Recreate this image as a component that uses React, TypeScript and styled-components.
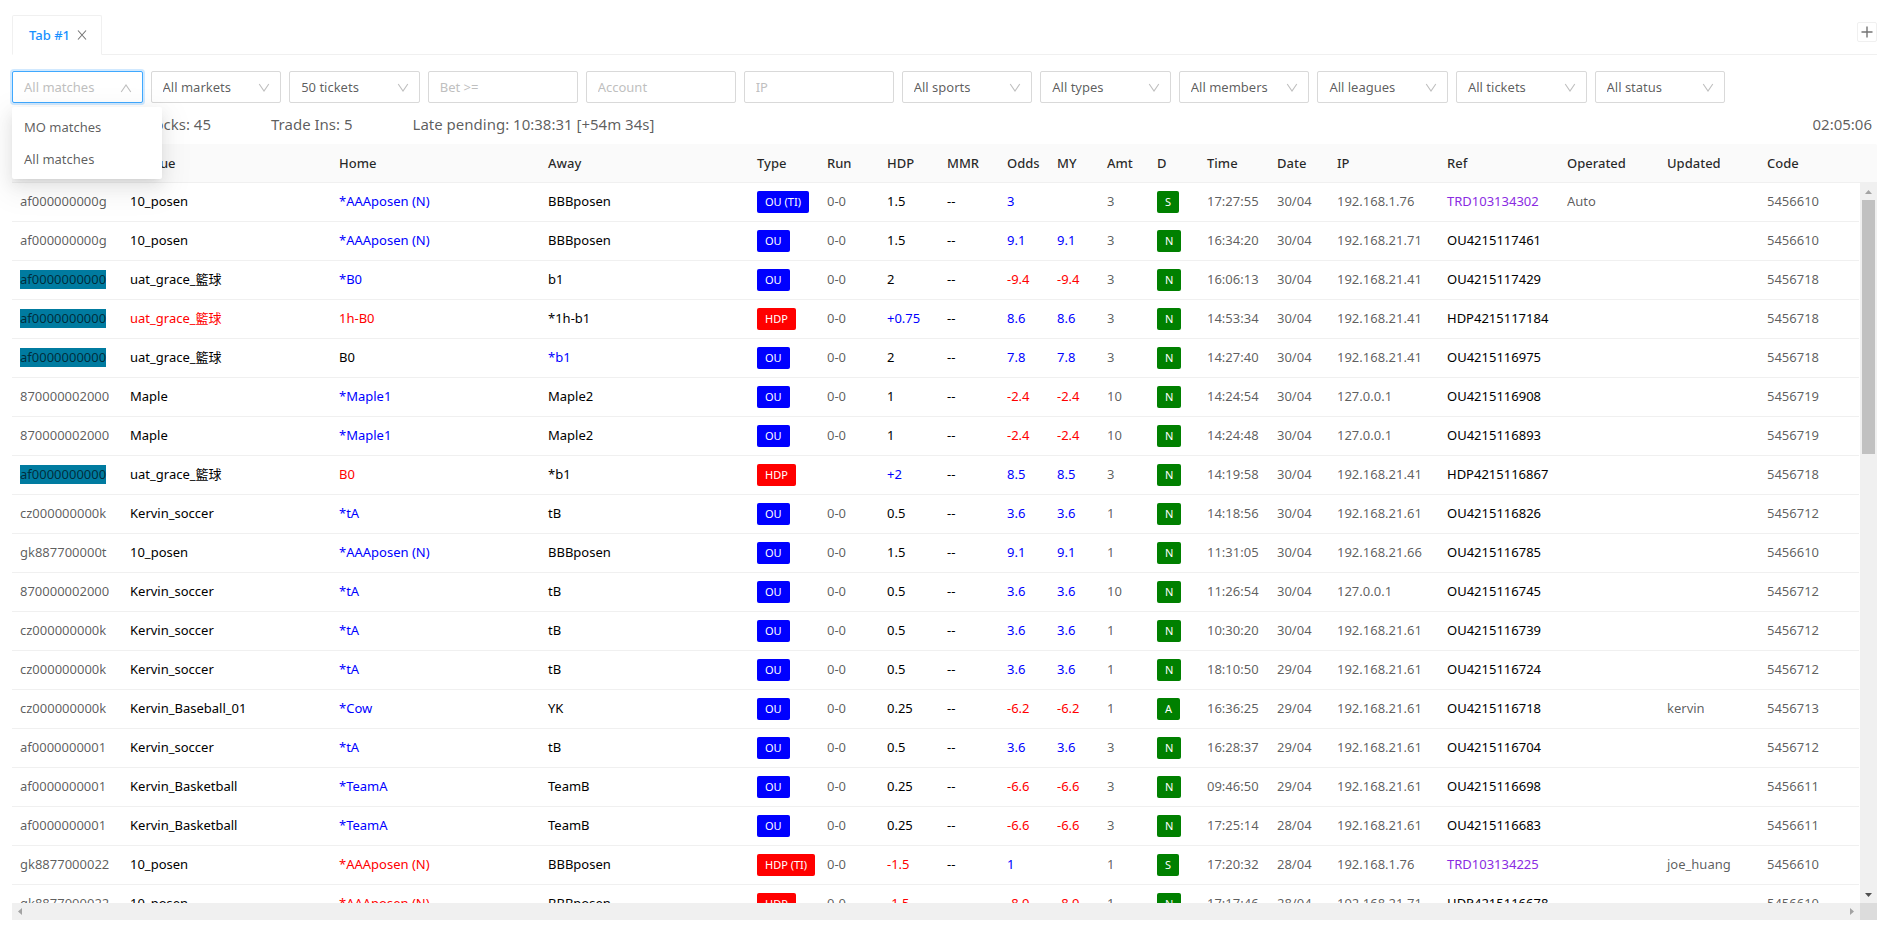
import React from "react";
import styled, { createGlobalStyle, css } from "styled-components";

const GlobalStyle = createGlobalStyle`
  *, *::before, *::after { box-sizing: border-box; }
  body {
    margin: 0;
    background: #fff;
    color: rgba(0, 0, 0, 0.65);
    font: 13px/22px "Noto Sans", "Open Sans", "Noto Sans CJK TC", sans-serif;
  }
  button, input, select { font: inherit; color: inherit; }
`;

const Page = styled.main`
  display: flex;
  flex-direction: column;
  height: 100vh;
  padding: 15px 17px 10px 12px;
`;

/* ---- tabs ---- */
const TabBar = styled.div`
  display: flex;
  flex: none;
  align-items: flex-end;
  justify-content: space-between;
  height: 40px;
  border-bottom: 1px solid #f0f0f0;
`;

const Tab = styled.div`
  display: flex;
  align-items: center;
  gap: 7px;
  height: 40px;
  margin-bottom: -1px;
  padding: 0 14px 0 16px;
  border: 1px solid #f0f0f0;
  border-bottom-color: #fff;
  border-radius: 2px 2px 0 0;
  background: #fff;
`;

const TabLabel = styled.button`
  padding: 0;
  border: 0;
  background: none;
  color: #1890ff;
  font-weight: 500;
`;

const IconButton = styled.button<{ $boxed?: boolean }>`
  display: flex;
  align-items: center;
  justify-content: center;
  padding: 0;
  border: 0;
  background: none;
  color: rgba(0, 0, 0, 0.55);
  ${(p) =>
    p.$boxed &&
    css`
      align-self: center;
      width: 20px;
      height: 20px;
      margin-bottom: 6px;
      border: 1px solid #f0f0f0;
      border-radius: 2px;
    `}
`;

/* ---- filters ---- */
const Filters = styled.form`
  display: flex;
  flex: none;
  gap: 8px;
  max-width: 1713px;
  margin-top: 16px;
`;

const SelectBox = styled.div`
  position: relative;
  flex: 1 1 0;
  min-width: 0;
`;

const Select = styled.select<{ $open?: boolean }>`
  display: block;
  width: 100%;
  height: 32px;
  padding: 0 28px 0 11px;
  border: 1px solid ${(p) => (p.$open ? "#40a9ff" : "#d9d9d9")};
  border-radius: 2px;
  outline: 0;
  box-shadow: ${(p) => (p.$open ? "0 0 0 2px rgba(24, 144, 255, 0.2)" : "none")};
  background: #fff;
  color: ${(p) => (p.$open ? "#bfbfbf" : "rgba(0, 0, 0, 0.65)")};
  appearance: none;
`;

const Arrow = styled.svg`
  position: absolute;
  top: 11px;
  right: 11px;
  pointer-events: none;
`;

const Menu = styled.ul`
  position: absolute;
  z-index: 10;
  top: 36px;
  left: 0;
  width: 150px;
  margin: 0;
  padding: 4px 0;
  border-radius: 2px;
  background: #fff;
  box-shadow: 0 3px 6px -4px rgba(0, 0, 0, 0.12), 0 6px 16px 0 rgba(0, 0, 0, 0.08),
    0 9px 28px 8px rgba(0, 0, 0, 0.05);
  list-style: none;
`;

const MenuItem = styled.li`
  padding: 5px 12px;
`;

const TextInput = styled.input`
  flex: none;
  width: 150px;
  height: 32px;
  padding: 0 11px;
  border: 1px solid #d9d9d9;
  border-radius: 2px;
  outline: 0;
  &::placeholder { color: #bfbfbf; opacity: 1; }
`;

/* ---- summary ---- */
const Summary = styled.div`
  display: flex;
  flex: none;
  align-items: center;
  gap: 60px;
  height: 41px;
  padding: 0 5px 0 81px;
  font-size: 15px;
  white-space: nowrap;
`;

const Stat = styled.span`
  &:first-child { width: 118px; text-align: right; }
`;

const Clock = styled.time`
  margin-left: auto;
`;

/* ---- table ---- */
const HeadWrap = styled.div`
  flex: none;
  padding-right: 18px;
  border-bottom: 1px solid #f0f0f0;
  border-radius: 2px 2px 0 0;
  background: #fafafa;
`;

const Scroller = styled.div`
  display: grid;
  flex: 1;
  grid-template: minmax(0, 1fr) 17px / minmax(0, 1fr) 17px;
  min-height: 0;
`;

const BodyWrap = styled.div`
  overflow: hidden;
  padding-right: 1px;
`;

const Grid = styled.table`
  width: 100%;
  table-layout: fixed;
  border-spacing: 0;
  white-space: nowrap;
`;

const Th = styled.th`
  height: 38px;
  padding: 0 8px;
  color: rgba(0, 0, 0, 0.85);
  font-weight: 500;
  text-align: left;
`;

const Td = styled.td<{ $color?: string }>`
  height: 39px;
  padding: 8px 8px 0;
  border-bottom: 1px solid #f0f0f0;
  color: ${(p) => p.$color ?? "rgba(0, 0, 0, 0.65)"};
  line-height: 20px;
  vertical-align: top;
`;

const Marked = styled.span`
  padding-bottom: 1px;
  background: #007ba0;
`;

const Tag = styled.span<{ $bg: string }>`
  display: block;
  width: fit-content;
  padding: 0 8px;
  border-radius: 2px;
  background: ${(p) => p.$bg};
  color: #fff;
  font-size: 11px;
  line-height: 22px;
`;

/* ---- scroll bars ---- */
const Bar = styled.div<{ $vertical?: boolean }>`
  display: flex;
  flex-direction: ${(p) => (p.$vertical ? "column" : "row")};
  justify-content: space-between;
  background: #f0f0f0;
`;

const Track = styled.div`
  flex: 1;
  padding: 0 2px;
`;

const Thumb = styled.div`
  height: 37%;
  background: #c1c1c1;
`;

const Corner = styled.div`
  background: #dcdcdc;
`;

type ArrowDir = "up" | "down" | "left" | "right";
const ARROWS: Record<ArrowDir, string> = {
  up: "M5 11 8.5 7 12 11Z",
  down: "M5 7 8.5 11 12 7Z",
  left: "M10 5 6 8.5 10 12Z",
  right: "M7 5 11 8.5 7 12Z",
};

const BarArrow = ({ dir, dark }: { dir: ArrowDir; dark?: boolean }) => (
  <svg width="17" height="17" viewBox="0 0 17 17" aria-hidden="true">
    <path d={ARROWS[dir]} fill={dark ? "#505050" : "#a3a3a3"} />
  </svg>
);

const FilterSelect = ({ label, items }: { label: string; items?: string[] }) => (
  <SelectBox>
    <Select aria-label={label} defaultValue={label} $open={!!items}>
      {(items ?? [label]).map((t) => (
        <option key={t}>{t}</option>
      ))}
    </Select>
    <Arrow width="12" height="12" viewBox="0 0 12 12" fill="none" stroke="#bfbfbf" strokeWidth="1.1">
      <path d={items ? "M1.2 10 6 3 10.8 10" : "M1.2 2 6 9 10.8 2"} />
    </Arrow>
    {items && (
      <Menu role="listbox" aria-label={label}>
        {items.map((t) => (
          <MenuItem key={t} role="option" aria-selected={t === label}>
            {t}
          </MenuItem>
        ))}
      </Menu>
    )}
  </SelectBox>
);

const COLUMNS: [string, number?][] = [
  ["Account", 110], ["League"], ["Home"], ["Away"], ["Type", 70], ["Run", 60], ["HDP", 60],
  ["MMR", 60], ["Odds", 50], ["MY", 50], ["Amt", 50], ["D", 50], ["Time", 70], ["Date", 60],
  ["IP", 110], ["Ref", 120], ["Operated", 100], ["Updated", 100], ["Code", 100],
];

const Columns = () => (
  <colgroup>
    {COLUMNS.map(([name, width]) => (
      <col key={name} width={width} />
    ))}
  </colgroup>
);

/* account | league | home | away | type | run | hdp | odds | my | amt | d | time | date | ip | ref | operated | updated | code
   A leading "!" draws the name in red, "~" in blue. */
const ROWS = `
af000000000g|10_posen|~*AAAposen (N)|BBBposen|OU (TI)|0-0|1.5|3||3|S|17:27:55|30/04|192.168.1.76|TRD103134302|Auto||5456610
af000000000g|10_posen|~*AAAposen (N)|BBBposen|OU|0-0|1.5|9.1|9.1|3|N|16:34:20|30/04|192.168.21.71|OU4215117461|||5456610
af0000000000|uat_grace_籃球|~*B0|b1|OU|0-0|2|-9.4|-9.4|3|N|16:06:13|30/04|192.168.21.41|OU4215117429|||5456718
af0000000000|!uat_grace_籃球|!1h-B0|*1h-b1|HDP|0-0|+0.75|8.6|8.6|3|N|14:53:34|30/04|192.168.21.41|HDP4215117184|||5456718
af0000000000|uat_grace_籃球|B0|~*b1|OU|0-0|2|7.8|7.8|3|N|14:27:40|30/04|192.168.21.41|OU4215116975|||5456718
870000002000|Maple|~*Maple1|Maple2|OU|0-0|1|-2.4|-2.4|10|N|14:24:54|30/04|127.0.0.1|OU4215116908|||5456719
870000002000|Maple|~*Maple1|Maple2|OU|0-0|1|-2.4|-2.4|10|N|14:24:48|30/04|127.0.0.1|OU4215116893|||5456719
af0000000000|uat_grace_籃球|!B0|*b1|HDP||+2|8.5|8.5|3|N|14:19:58|30/04|192.168.21.41|HDP4215116867|||5456718
cz000000000k|Kervin_soccer|~*tA|tB|OU|0-0|0.5|3.6|3.6|1|N|14:18:56|30/04|192.168.21.61|OU4215116826|||5456712
gk887700000t|10_posen|~*AAAposen (N)|BBBposen|OU|0-0|1.5|9.1|9.1|1|N|11:31:05|30/04|192.168.21.66|OU4215116785|||5456610
870000002000|Kervin_soccer|~*tA|tB|OU|0-0|0.5|3.6|3.6|10|N|11:26:54|30/04|127.0.0.1|OU4215116745|||5456712
cz000000000k|Kervin_soccer|~*tA|tB|OU|0-0|0.5|3.6|3.6|1|N|10:30:20|30/04|192.168.21.61|OU4215116739|||5456712
cz000000000k|Kervin_soccer|~*tA|tB|OU|0-0|0.5|3.6|3.6|1|N|18:10:50|29/04|192.168.21.61|OU4215116724|||5456712
cz000000000k|Kervin_Baseball_01|~*Cow|YK|OU|0-0|0.25|-6.2|-6.2|1|A|16:36:25|29/04|192.168.21.61|OU4215116718||kervin|5456713
af0000000001|Kervin_soccer|~*tA|tB|OU|0-0|0.5|3.6|3.6|3|N|16:28:37|29/04|192.168.21.61|OU4215116704|||5456712
af0000000001|Kervin_Basketball|~*TeamA|TeamB|OU|0-0|0.25|-6.6|-6.6|3|N|09:46:50|29/04|192.168.21.61|OU4215116698|||5456611
af0000000001|Kervin_Basketball|~*TeamA|TeamB|OU|0-0|0.25|-6.6|-6.6|3|N|17:25:14|28/04|192.168.21.61|OU4215116683|||5456611
gk8877000022|10_posen|!*AAAposen (N)|BBBposen|HDP (TI)|0-0|-1.5|1||1|S|17:20:32|28/04|192.168.1.76|TRD103134225||joe_huang|5456610
gk8877000022|10_posen|!*AAAposen (N)|BBBposen|HDP|0-0|-1.5|-8.9|-8.9|1|N|17:17:46|28/04|192.168.21.71|HDP4215116678|||5456610
`
  .trim()
  .split("\n")
  .map((line) => line.split("|"));

const signColor = (v: string) => (v.startsWith("-") ? "red" : "blue");
const hdpColor = (v: string) => (/^[+-]/.test(v) ? signColor(v) : "#000");

const NameCell = ({ value }: { value: string }) => {
  const color = value[0] === "!" ? "red" : value[0] === "~" ? "blue" : "#000";
  return <Td $color={color}>{value.replace(/^[!~]/, "")}</Td>;
};

const TicketRow = ({ cells }: { cells: string[] }) => {
  const [account, league, home, away, type, run, hdp, odds, my, amt, d, time, date, ip, ref, operated, updated, code] =
    cells;
  return (
    <tr>
      <Td>{account === "af0000000000" ? <Marked>{account}</Marked> : account}</Td>
      <NameCell value={league} />
      <NameCell value={home} />
      <NameCell value={away} />
      <Td>
        <Tag $bg={type.startsWith("HDP") ? "red" : "blue"}>{type}</Tag>
      </Td>
      <Td>{run}</Td>
      <Td $color={hdpColor(hdp)}>{hdp}</Td>
      <Td $color="#000">--</Td>
      <Td $color={signColor(odds)}>{odds}</Td>
      <Td $color={signColor(my)}>{my}</Td>
      <Td>{amt}</Td>
      <Td>
        <Tag $bg="green">{d}</Tag>
      </Td>
      <Td>{time}</Td>
      <Td>{date}</Td>
      <Td>{ip}</Td>
      <Td $color={ref.startsWith("TRD") ? "blueviolet" : "#000"}>{ref}</Td>
      <Td>{operated}</Td>
      <Td>{updated}</Td>
      <Td>{code}</Td>
    </tr>
  );
};

export default function App() {
  return (
    <Page>
      <GlobalStyle />
      <TabBar>
        <Tab>
          <TabLabel type="button">Tab #1</TabLabel>
          <IconButton type="button" aria-label="Close tab">
            <svg width="10" height="10" viewBox="0 0 10 10" stroke="currentColor" strokeWidth="1.1">
              <path d="M1 0.5 9 9.5M9 0.5 1 9.5" />
            </svg>
          </IconButton>
        </Tab>
        <IconButton type="button" aria-label="Add tab" $boxed>
          <svg width="12" height="12" viewBox="0 0 12 12" stroke="currentColor" strokeWidth="1.4">
            <path d="M6 0.5V11.5M0.5 6H11.5" />
          </svg>
        </IconButton>
      </TabBar>

      <Filters>
        <FilterSelect label="All matches" items={["MO matches", "All matches"]} />
        <FilterSelect label="All markets" />
        <FilterSelect label="50 tickets" />
        <TextInput placeholder="Bet &gt;=" aria-label="Bet" />
        <TextInput placeholder="Account" aria-label="Account" />
        <TextInput placeholder="IP" aria-label="IP" />
        <FilterSelect label="All sports" />
        <FilterSelect label="All types" />
        <FilterSelect label="All members" />
        <FilterSelect label="All leagues" />
        <FilterSelect label="All tickets" />
        <FilterSelect label="All status" />
      </Filters>

      <Summary>
        <Stat>Blocks: 45</Stat>
        <Stat>Trade Ins: 5</Stat>
        <Stat>Late pending: 10:38:31 [+54m 34s]</Stat>
        <Clock>02:05:06</Clock>
      </Summary>

      <HeadWrap>
        <Grid>
          <Columns />
          <thead>
            <tr>
              {COLUMNS.map(([name]) => (
                <Th key={name} scope="col">
                  {name}
                </Th>
              ))}
            </tr>
          </thead>
        </Grid>
      </HeadWrap>
      <Scroller>
        <BodyWrap>
          <Grid>
            <Columns />
            <tbody>
              {ROWS.map((cells) => (
                <TicketRow key={cells[14]} cells={cells} />
              ))}
            </tbody>
          </Grid>
        </BodyWrap>
        <Bar $vertical>
          <BarArrow dir="up" />
          <Track>
            <Thumb />
          </Track>
          <BarArrow dir="down" dark />
        </Bar>
        <Bar>
          <BarArrow dir="left" />
          <BarArrow dir="right" />
        </Bar>
        <Corner />
      </Scroller>
    </Page>
  );
}
